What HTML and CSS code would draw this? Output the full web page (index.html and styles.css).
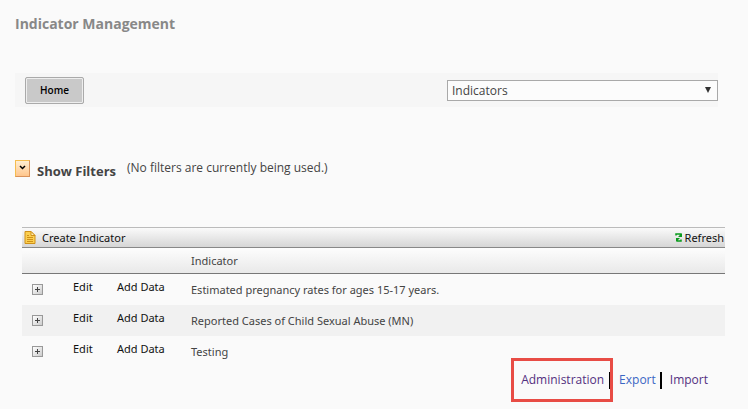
FILE: index.html
```
<!DOCTYPE html>
<html lang="en">
<head>
<meta charset="utf-8">
<title>Indicator Management</title>
<link rel="stylesheet" href="styles.css">
</head>
<body>

<h1>Indicator Management</h1>

<div class="toolbar">
  <button type="button" class="home">Home</button>
  <div class="picker">
    <select class="type" aria-label="Type">
      <option>Indicators</option>
    </select>
    <svg class="arrow" width="8" height="8" viewBox="0 0 8 8"><path d="M1 1h6L4 7z" fill="#333"/></svg>
  </div>
</div>

<div class="filters">
  <button type="button" class="toggle" aria-label="Show filters">
    <svg width="7" height="6" viewBox="0 0 7 6"><path d="M1 1l2.500 2.500L6 1" fill="none" stroke="#000" stroke-width="1.500"/></svg>
  </button>
  <h2>Show Filters</h2>
  <span class="note">(No filters are currently being used.)</span>
</div>

<div class="grid">
  <div class="commands">
    <a href="#create">
      <svg width="12" height="13" viewBox="0 0 12 13"><path d="M1 .5h6l4 4v8H1z" fill="#fbcf50" stroke="#cf9018"/><path d="M7 .5v4h4z" fill="#fff1b8" stroke="#cf9018"/><path d="M3 4.500h2M3 6.500h6M3 8.500h6M3 10.500h6" stroke="#cf9018"/></svg>
      Create Indicator
    </a>
    <a href="#refresh" class="refresh">
      <svg width="8" height="11" viewBox="0 0 8 11"><path d="M1 3.500V2h4.500v2M2 9h4V7.500M2 9V7.500" fill="none" stroke="#0a9a1c" stroke-width="1.500"/><path d="M7 1v4H3zM1 10V6h4z" fill="#0a9a1c"/></svg>
      Refresh
    </a>
  </div>
  <table>
    <thead>
      <tr><th class="expand"></th><th class="edit"></th><th class="add"></th><th>Indicator</th></tr>
    </thead>
    <tbody>
      <tr>
        <td><button type="button" class="plus" aria-label="Expand"><svg width="5" height="5" viewBox="0 0 5 5"><path d="M2.500 0v5M0 2.500h5" stroke="#444"/></svg></button></td>
        <td class="link"><a href="#edit">Edit</a></td>
        <td class="link"><a href="#add">Add Data</a></td>
        <td>Estimated pregnancy rates for ages 15-17 years.</td>
      </tr>
      <tr class="alt">
        <td><button type="button" class="plus" aria-label="Expand"><svg width="5" height="5" viewBox="0 0 5 5"><path d="M2.500 0v5M0 2.500h5" stroke="#444"/></svg></button></td>
        <td class="link"><a href="#edit">Edit</a></td>
        <td class="link"><a href="#add">Add Data</a></td>
        <td>Reported Cases of Child Sexual Abuse (MN)</td>
      </tr>
      <tr>
        <td><button type="button" class="plus" aria-label="Expand"><svg width="5" height="5" viewBox="0 0 5 5"><path d="M2.500 0v5M0 2.500h5" stroke="#444"/></svg></button></td>
        <td class="link"><a href="#edit">Edit</a></td>
        <td class="link"><a href="#add">Add Data</a></td>
        <td>Testing</td>
      </tr>
    </tbody>
  </table>
</div>

<div class="footer">
  <div class="marked"><a href="#admin">Administration</a><span class="bar"></span></div>
  <a href="#export" class="export">Export</a><span class="bar"></span>
  <a href="#import">Import</a>
</div>

</body>
</html>
```

FILE: styles.css
```
body {
  margin: 0;
  padding: 14px 23px 0 15px;
  background-color: #fafafa;
  color: #444;
  font-family: "Open Sans", "Noto Sans", sans-serif;
  font-size: 12px;
  line-height: 16px;
}
h1 {
  margin: 0 0 39px;
  color: #888;
  font-size: 14px;
  line-height: 20px;
}
.toolbar {
  display: flex;
  justify-content: space-between;
  align-items: center;
  height: 34px;
  margin-right: 7px;
  padding-left: 10px;
  background-color: #f6f6f6;
}
.home {
  width: 59px;
  height: 27px;
  padding: 0;
  border: 1px solid #aaa;
  border-radius: 2px;
  background-color: #c9c9c9;
  box-shadow: inset 0 0 0 1px #eee;
  color: #000;
  font-family: inherit;
  font-size: 10px;
  font-weight: 600;
}
.picker {
  position: relative;
  width: 271px;
}
.type {
  appearance: none;
  display: block;
  width: 100%;
  height: 21px;
  padding: 1px 4px 0;
  border: 1px solid #a9a9a9;
  border-radius: 0;
  background-color: #fcfcfc;
  color: #444;
  font-family: inherit;
  font-size: 12px;
}
.arrow {
  position: absolute;
  top: 6px;
  right: 6px;
  pointer-events: none;
}
.filters {
  display: flex;
  align-items: center;
  height: 20px;
  margin-top: 51px;
}
.toggle {
  display: flex;
  align-items: center;
  justify-content: center;
  width: 15px;
  height: 17px;
  padding: 0;
  border: 1px solid #e8a33d;
  border-color: #f5bd4f #d9925a #d9925a #f5bd4f;
  background: linear-gradient(#ffeed2, #ffc68c);
}
.filters h2 {
  margin: 0 11px 0 7px;
  padding-top: 6px;
  font-size: 13px;
  line-height: 16px;
}
.grid {
  margin: 49px 0 0 7px;
  font-family: "Noto Sans", "Open Sans", sans-serif;
  font-size: 11px;
}
.commands {
  display: flex;
  justify-content: space-between;
  align-items: center;
  height: 19px;
  padding: 0 1px 0 2px;
  border-top: 1px solid #bbb;
  border-bottom: 1px solid #888;
  background: linear-gradient(#fafafa, #d6d6d6);
}
.commands a {
  display: flex;
  align-items: center;
  gap: 6px;
  color: #111;
  text-decoration: none;
}
.commands .refresh {
  gap: 2px;
}
table {
  width: 100%;
  border-collapse: collapse;
  table-layout: fixed;
}
th {
  height: 25px;
  padding: 0;
  border-bottom: 1px solid #777;
  font-weight: normal;
  text-align: left;
}
thead {
  background: linear-gradient(#fdfdfd, #e8e8e8);
}
.expand {
  width: 51px;
}
.edit {
  width: 44px;
}
.add {
  width: 74px;
}
td {
  height: 31px;
  padding: 0;
}
.alt {
  background-color: #f1f1f1;
}
td.link {
  height: 26px;
  padding-bottom: 5px;
}
.link a {
  color: #111;
  text-decoration: none;
}
.plus {
  display: flex;
  align-items: center;
  justify-content: center;
  width: 11px;
  height: 11px;
  margin-left: 10px;
  padding: 0;
  border: 1px solid #999;
  background: linear-gradient(135deg, #fff, #ccc);
}
.footer {
  display: flex;
  justify-content: flex-end;
  align-items: center;
  margin: -9px 17px 0 0;
}
.footer a {
  color: #53307f;
  text-decoration: none;
}
.footer .export {
  margin-left: 6px;
  color: #3b66c4;
}
.marked {
  display: flex;
  align-items: center;
  height: 38px;
  padding-left: 7px;
  border: 3px solid #e84c45;
}
.bar {
  width: 2px;
  height: 17px;
  margin: 0 8px 0 4px;
  background-color: #000;
}
.marked .bar {
  width: 1px;
  margin: 0 0 0 5px;
}
```
